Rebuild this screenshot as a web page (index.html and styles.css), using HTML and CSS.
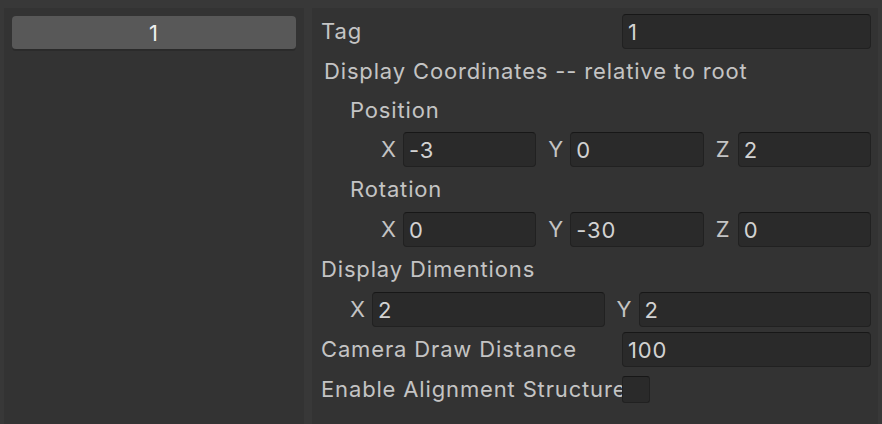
FILE: index.html
```html
<!DOCTYPE html>
<html>
<head>
<meta charset="utf-8">
<link rel="stylesheet" href="styles.css">
</head>
<body>
<div class="app">
  <div class="list-panel">
    <div class="list-button">1</div>
  </div>
  <div class="inspector">
    <div class="row field-row">
      <div class="label">Tag</div>
      <div class="input">1</div>
    </div>
    <div class="row label-row tight">
      <div class="label coords">Display Coordinates -- relative to root</div>
    </div>
    <div class="row label-row tight indent1">
      <div class="label">Position</div>
    </div>
    <div class="row vec-row indent2">
      <div class="vec-item"><span class="axis">X</span><div class="input">-3</div></div>
      <div class="vec-item"><span class="axis">Y</span><div class="input">0</div></div>
      <div class="vec-item"><span class="axis">Z</span><div class="input">2</div></div>
    </div>
    <div class="row label-row indent1">
      <div class="label">Rotation</div>
    </div>
    <div class="row vec-row indent2">
      <div class="vec-item"><span class="axis">X</span><div class="input">0</div></div>
      <div class="vec-item"><span class="axis">Y</span><div class="input">-30</div></div>
      <div class="vec-item"><span class="axis">Z</span><div class="input">0</div></div>
    </div>
    <div class="row label-row">
      <div class="label">Display Dimentions</div>
    </div>
    <div class="row vec-row indent1">
      <div class="vec-item"><span class="axis">X</span><div class="input">2</div></div>
      <div class="vec-item"><span class="axis">Y</span><div class="input">2</div></div>
    </div>
    <div class="row field-row">
      <div class="label">Camera Draw Distance</div>
      <div class="input">100</div>
    </div>
    <div class="row field-row">
      <div class="label">Enable Alignment Structure</div>
      <div class="check-cell"><div class="checkbox"></div></div>
    </div>
  </div>
</div>
</body>
</html>
```

FILE: styles.css
```css
* { box-sizing: border-box; }
html, body {
  margin: 0;
  padding: 0;
  background: #383838;
  width: 882px;
  height: 424px;
  overflow: hidden;
  font-family: Inter, "Noto Sans", sans-serif;
  font-size: 22px;
  letter-spacing: 0.85px;
  color: #c4c4c4;
}
.app {
  display: flex;
  gap: 8px;
  padding: 8px 4px 0 4px;
  height: 424px;
}
.list-panel {
  width: 300px;
  background: #333333;
  padding: 8px 8px 0 8px;
}
.list-button {
  height: 34px;
  background: #585858;
  border-radius: 4px;
  border-bottom: 1px solid #2a2a2a;
  box-shadow: 0 1px 0 #2b2b2b;
  color: #eeeeee;
  display: flex;
  align-items: center;
  justify-content: center;
  line-height: 1;
}
.inspector {
  flex: 1;
  background: #333333;
  padding: 6px 7px 0 9px;
  display: flex;
  flex-direction: column;
  gap: 5px;
}
.row {
  height: 35px;
  display: flex;
  align-items: center;
}
.row.tight { height: 34px; }
.field-row {
  display: grid;
  grid-template-columns: 301px 1fr;
  align-items: center;
}
.label {
  white-space: nowrap;
  overflow: hidden;
  line-height: 35px;
}
.label.coords { padding-left: 3px; }
.indent1 { padding-left: 29px; }
.indent2 { padding-left: 60px; }
.input {
  height: 35px;
  background: #2a2a2a;
  border: 1px solid #212121;
  border-top-color: #171717;
  border-radius: 4px;
  color: #d2d2d2;
  padding-left: 5px;
  display: flex;
  align-items: center;
  line-height: 1;
  min-width: 0;
}
.vec-row { gap: 12px; }
.vec-item {
  flex: 1;
  display: flex;
  align-items: center;
  min-width: 0;
}
.vec-item .axis {
  width: 22px;
  flex: none;
  line-height: 35px;
}
.vec-item .input { flex: 1; }
.check-cell {
  display: flex;
  align-items: center;
}
.checkbox {
  width: 28px;
  height: 27px;
  background: #2a2a2a;
  border: 1px solid #212121;
  border-top-color: #171717;
  border-radius: 3px;
}
```
